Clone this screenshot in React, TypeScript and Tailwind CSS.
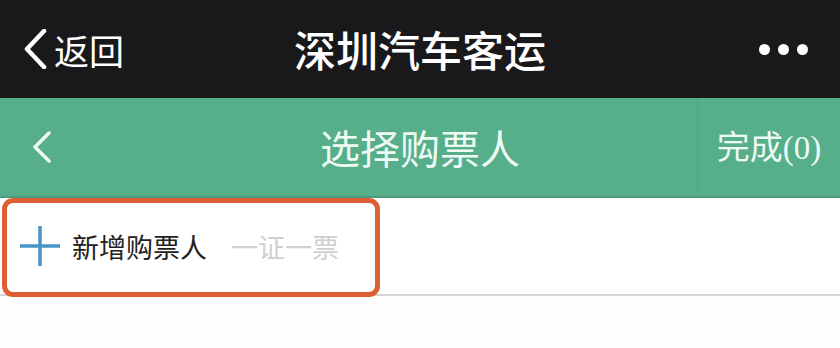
import React from 'react';

const cjk = { fontFamily: '"Noto Sans CJK SC", "Noto Sans", sans-serif' };

const App: React.FC = () => {
  return (
    <div className="w-[840px] h-[348px] overflow-hidden bg-[#fdfdfd]" style={cjk}>
      {/* WeChat top bar */}
      <div className="h-[98px] bg-[#19181b] grid grid-cols-[1fr_auto_1fr] items-center text-white">
        <div className="flex items-center pl-[22px]">
          <svg width="26" height="40" viewBox="0 0 26 40" className="mr-[6px]">
            <path d="M22 2 L5 20 L22 38" fill="none" stroke="#ffffff" strokeWidth="4.5" strokeLinecap="round" strokeLinejoin="round" />
          </svg>
          <span className="text-[35px] leading-none">返回</span>
        </div>
        <div className="text-[42px] leading-none font-medium tracking-[0px]">深圳汽车客运</div>
        <div className="flex justify-end items-center gap-[8px] pr-[32px]">
          <span className="w-[11px] h-[11px] rounded-full bg-white" />
          <span className="w-[11px] h-[11px] rounded-full bg-white" />
          <span className="w-[11px] h-[11px] rounded-full bg-white" />
        </div>
      </div>

      {/* Green page header */}
      <div className="h-[100px] bg-[#56ae8b] border-b-2 border-[#4b9c7d] flex items-stretch text-[#eefaf4]">
        <div className="w-[697px] grid grid-cols-[1fr_auto_1fr] items-center">
          <div className="pl-[32px]">
            <svg width="20" height="32" viewBox="0 0 20 32">
              <path d="M17 2 L3 16 L17 30" fill="none" stroke="#eefaf4" strokeWidth="3.5" strokeLinecap="round" strokeLinejoin="round" />
            </svg>
          </div>
          <div className="text-[40px] leading-none pl-[143px]">选择购票人</div>
          <div />
        </div>
        <div className="flex-1 border-l border-[#4fa383] flex items-center justify-center">
          <span className="text-[33px] leading-none">
            完成<span style={{ fontFamily: '"Liberation Serif", serif' }}>(0)</span>
          </span>
        </div>
      </div>

      {/* Add passenger row */}
      <div className="relative h-[98px] bg-white border-b-2 border-[#d6d6d6] flex items-center pl-[20px]">
        <svg width="40" height="40" viewBox="0 0 40 40" className="mr-[12px]">
          <path d="M20 0 V40 M0 20 H40" stroke="#4a94c9" strokeWidth="3.5" />
        </svg>
        <span className="text-[27px] leading-none text-[#222222]">新增购票人</span>
        <span className="text-[27px] leading-none text-[#d0d0d0] ml-[24px]">一证一票</span>
        <div className="absolute left-[2px] top-0 w-[378px] h-[99px] border-[5px] border-[#dd5f36] rounded-[11px]" />
      </div>
    </div>
  );
};

export default App;
